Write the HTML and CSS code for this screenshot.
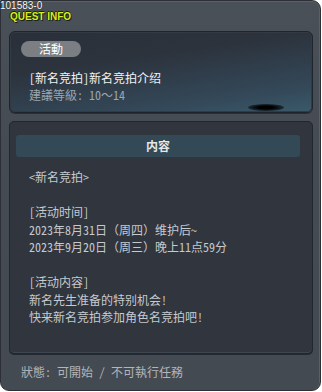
FILE: index.html
```html
<!DOCTYPE html>
<html lang="zh-CN">

<head>
  <meta charset="UTF-8" />
  <meta name="viewport" content="width=device-width, initial-scale=1.0" />
  <title>Quest Info</title>
  <link rel="stylesheet" href="styles.css">
</head>

<body>
  <div class="frame">
    <div class="head">
      <div class="code">101583-0</div>
      <div class="title">QUEST INFO</div>
    </div>

    <div class="summary">
      <div class="pill">活動</div>
      <div class="quest-name">[新名竞拍]新名竞拍介绍</div>
      <div class="level">建議等級: 10〜14</div>
      <div class="shadow"></div>
    </div>

    <div class="detail">
      <div class="bar">内容</div>
      <div class="text">
        <p>&lt;新名竞拍&gt;</p>
        <p>&nbsp;</p>
        <p>[活动时间]</p>
        <p>2023年8月31日（周四）维护后~</p>
        <p>2023年9月20日（周三）晚上11点59分</p>
        <p>&nbsp;</p>
        <p>[活动内容]</p>
        <p>新名先生准备的特别机会!</p>
        <p>快来新名竞拍参加角色名竞拍吧!</p>
      </div>
    </div>

    <div class="status">狀態: 可開始 / 不可執行任務</div>
  </div>
</body>

</html>
```

FILE: styles.css
```css
body {
  margin: 0;
  background: #fff;
  font-family: "Noto Sans Mono CJK SC", "Noto Sans CJK SC", "Liberation Sans", sans-serif;
  font-size: 12px;
  text-spacing-trim: space-all;
}

.frame {
  width: 321px;
  height: 391px;
  box-sizing: border-box;
  padding: 0 7px 0 8px;
  background: linear-gradient(180deg, #4a5058 0%, #454b53 40%, #444a52 100%);
  border: 1px solid #2c3036;
  border-radius: 0 9px 9px 9px;
  box-shadow: inset 0 1px 0 #5a6068, inset -1px 0 0 #5a6068;
}

.head {
  height: 30px;
  margin-left: -9px;
}

.code {
  font-family: "Liberation Sans", sans-serif;
  font-size: 10px;
  line-height: 10px;
  color: #fff;
  text-shadow: 0 0 1px #000;
}

.title {
  margin-left: 10px;
  margin-top: 1px;
  font-family: "Liberation Sans", sans-serif;
  font-weight: bold;
  font-size: 10px;
  line-height: 10px;
  color: #d6ee1e;
  text-shadow: 1px 1px 0 #1c2010, -1px 0 0 #1c2010, 0 -1px 0 #1c2010;
}

.summary {
  position: relative;
  height: 82px;
  box-sizing: border-box;
  padding: 9px 0 0 11px;
  border: 1px solid #20252c;
  border-radius: 6px;
  background: linear-gradient(172deg, #2a303a 0%, #2c333d 35%, #34495a 80%, #3a5a6a 100%);
  box-shadow: inset 0 0 0 1px #343a44, 0 1px 0 #2a2f36;
}

.pill {
  width: 60px;
  height: 16px;
  border-radius: 8px;
  background: #7b7f84;
  color: #fff;
  text-align: center;
  line-height: 16px;
}

.quest-name {
  margin: 12px 0 0 8px;
  line-height: 17px;
  color: #f2f2f2;
}

.level {
  margin-left: 8px;
  line-height: 17px;
  color: #9ba6b1;
}

.shadow {
  position: absolute;
  left: 238px;
  top: 72px;
  width: 36px;
  height: 7px;
  border-radius: 50%;
  background: radial-gradient(ellipse at center, #000 30%, rgba(0, 0, 0, 0.6) 60%, rgba(0, 0, 0, 0) 100%);
}

.detail {
  margin-top: 8px;
  height: 233px;
  box-sizing: border-box;
  padding: 13px 12px 0 6px;
  border: 1px solid #22272d;
  border-radius: 5px;
  background: #30353e;
  box-shadow: inset 0 -1px 0 #3d4852, 0 1px 0 #262a30;
}

.bar {
  height: 22px;
  line-height: 22px;
  border-radius: 3px;
  background: #334956;
  color: #e4e8ea;
  font-weight: bold;
  text-align: center;
}

.text {
  margin-top: 11px;
  padding-left: 13px;
  color: #c6cace;
}

.text p {
  margin: 0;
  line-height: 17.5px;
  white-space: nowrap;
}

.status {
  margin: 9px 0 0 12px;
  line-height: 17px;
  color: #b2b6ba;
}
```
